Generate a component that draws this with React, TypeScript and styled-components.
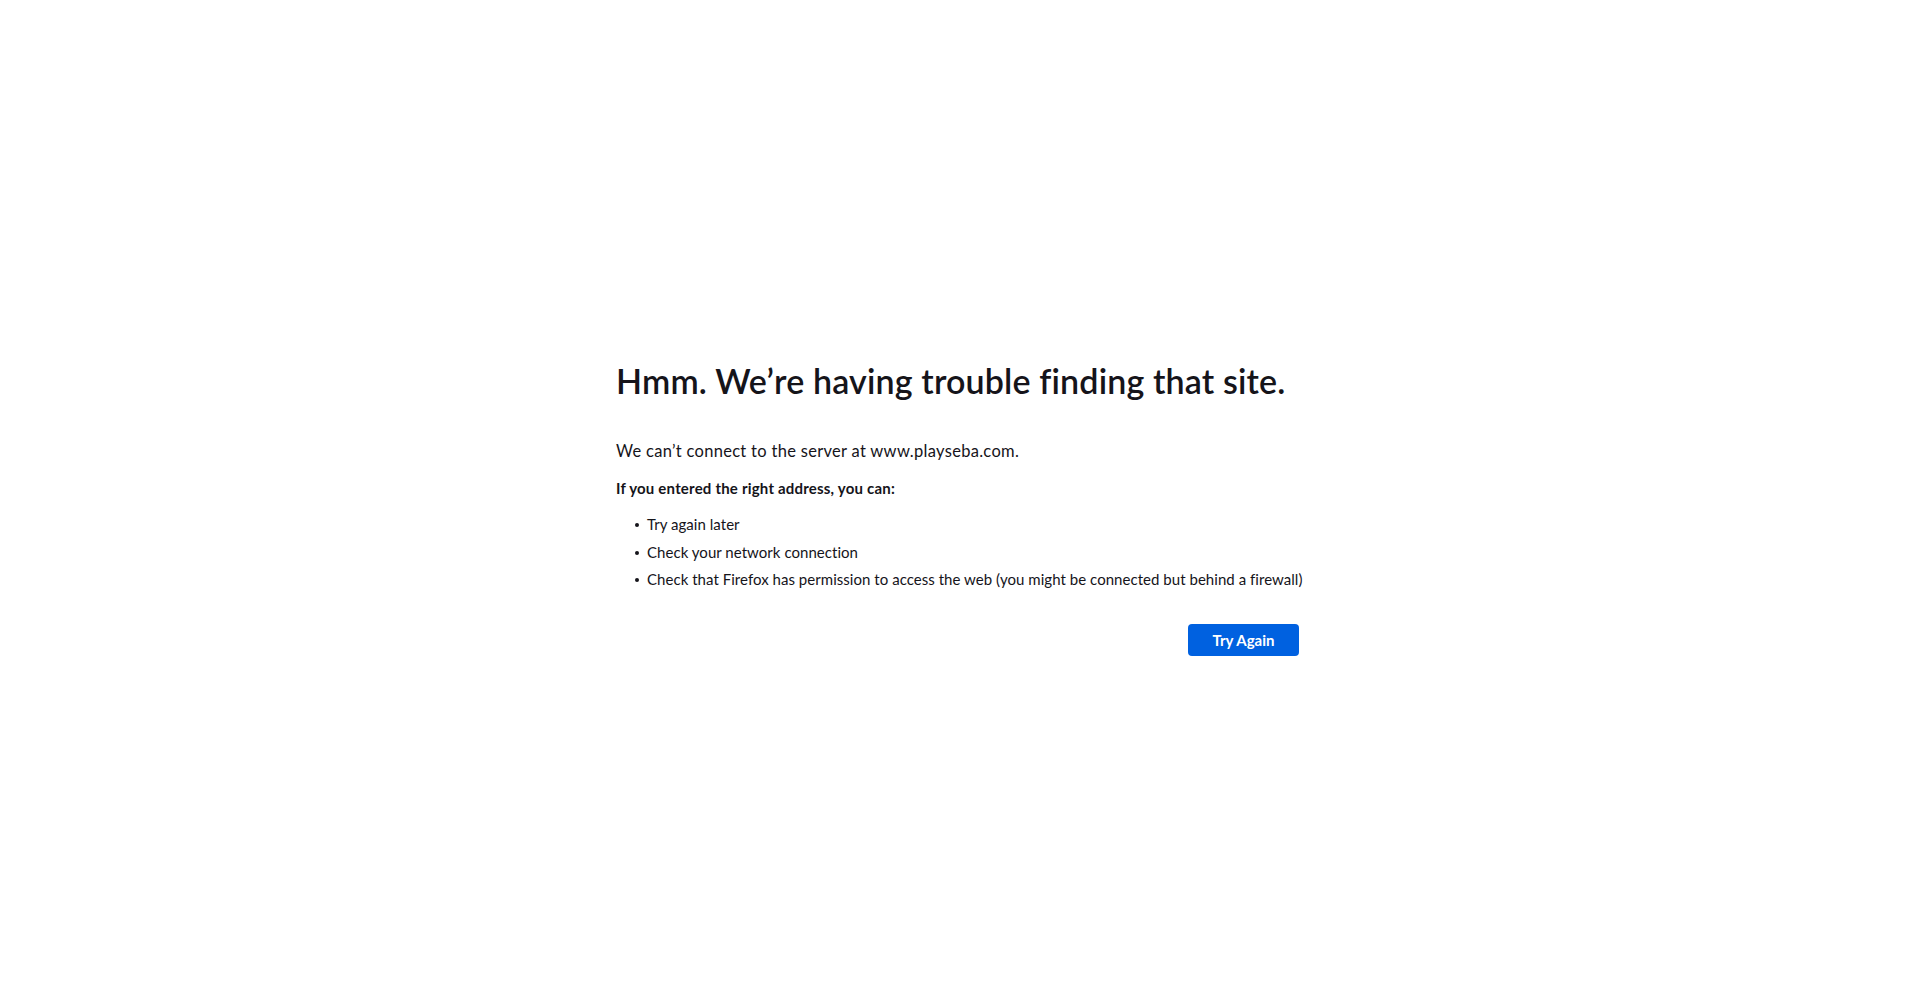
import React from "react";
import styled, { createGlobalStyle } from "styled-components";

const GlobalStyle = createGlobalStyle`
  html, body {
    margin: 0;
    padding: 0;
    background: #ffffff;
  }
  body {
    font-family: Lato, "Open Sans", sans-serif;
    color: #15141a;
    font-size: 15px;
  }
`;

const Page = styled.main`
  min-height: 100vh;
  display: flex;
  justify-content: center;
  box-sizing: border-box;
  padding-top: 361px;
`;

const Container = styled.div`
  width: 688px;
  display: flex;
  flex-direction: column;
`;

const Title = styled.h1`
  margin: 0;
  font-size: 34px;
  line-height: 1.2;
  font-weight: 600;
  letter-spacing: 0.15px;
  white-space: nowrap;
`;

const ShortDesc = styled.p`
  margin: 37px 0 0;
  font-size: 16.5px;
  line-height: 1.5;
  font-weight: 400;
  letter-spacing: 0.3px;
`;

const Lead = styled.p`
  margin: 13px 0 0;
  font-size: 15px;
  line-height: 1.5;
  font-weight: 700;
  letter-spacing: 0.2px;
`;

const List = styled.ul`
  margin: 14px 0 0;
  padding: 0 0 0 19px;
  list-style: none;
  display: flex;
  flex-direction: column;
  gap: 5px;
`;

const Item = styled.li`
  font-size: 15px;
  line-height: 1.5;
  letter-spacing: 0.04px;
  white-space: nowrap;

  &::before {
    content: "";
    display: inline-block;
    width: 4px;
    height: 4px;
    border-radius: 50%;
    background: #15141a;
    margin-right: 8px;
    vertical-align: middle;
    position: relative;
    top: -1px;
  }
`;

const Actions = styled.div`
  display: flex;
  justify-content: flex-end;
  margin-top: 33px;
`;

const Button = styled.button`
  margin: 0 5px 0 0;
  width: 111px;
  height: 32px;
  border: none;
  border-radius: 4px;
  background: #0061e0;
  color: #ffffff;
  font-family: inherit;
  font-size: 15px;
  font-weight: 700;
  cursor: pointer;
`;

const tips = [
  "Try again later",
  "Check your network connection",
  "Check that Firefox has permission to access the web (you might be connected but behind a firewall)",
];

export default function App() {
  return (
    <>
      <GlobalStyle />
      <Page>
        <Container>
          <Title>Hmm. We’re having trouble finding that site.</Title>
          <ShortDesc>We can’t connect to the server at www.playseba.com.</ShortDesc>
          <Lead>If you entered the right address, you can:</Lead>
          <List>
            {tips.map((t) => (
              <Item key={t}>{t}</Item>
            ))}
          </List>
          <Actions>
            <Button>Try Again</Button>
          </Actions>
        </Container>
      </Page>
    </>
  );
}
